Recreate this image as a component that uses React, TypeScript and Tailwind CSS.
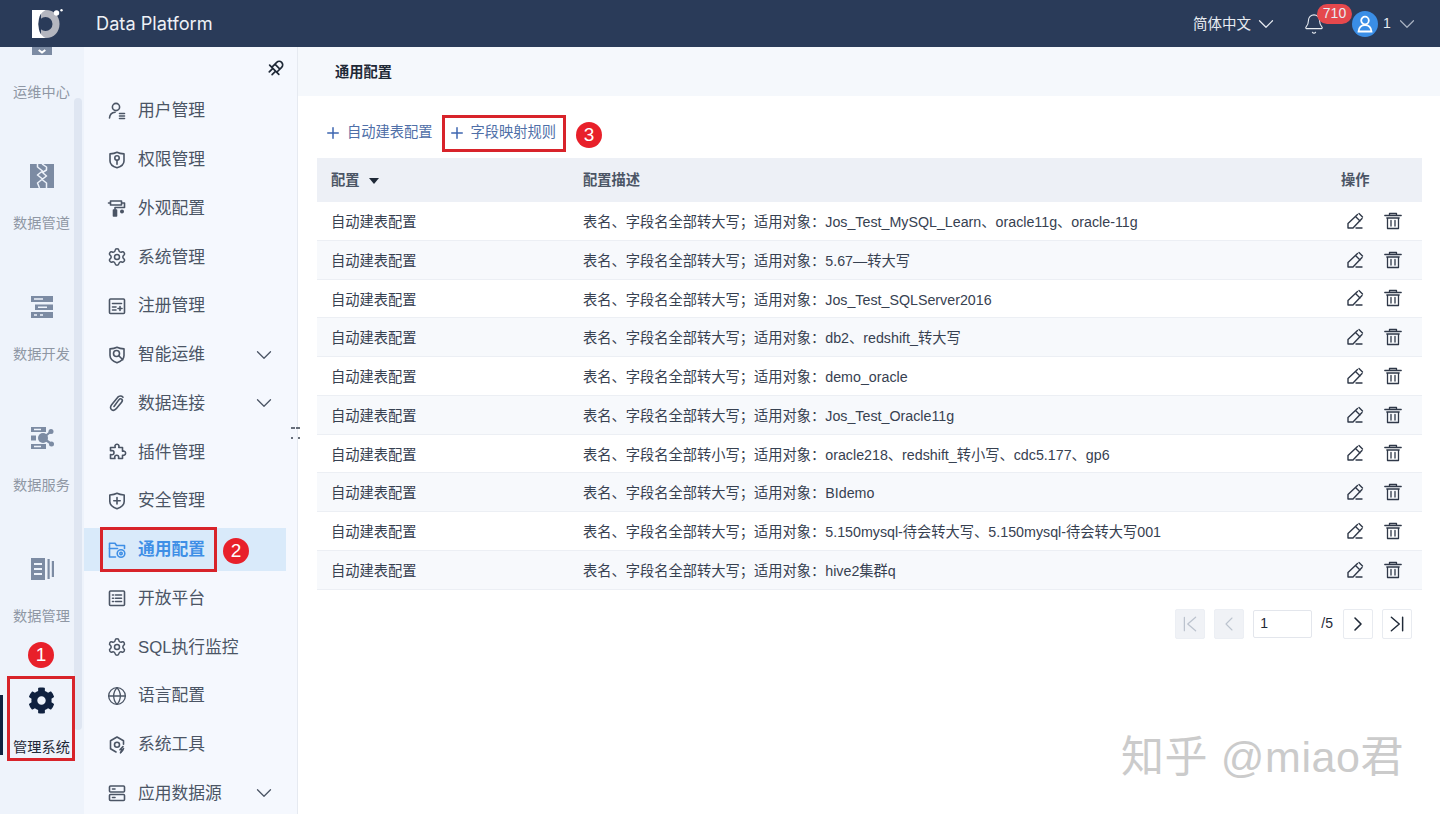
import { ChevronDown, ChevronLeft, ChevronRight, Globe, Settings, Plus, Bell } from "lucide-react";
import { FaCog } from "react-icons/fa";
import type { ReactNode } from "react";

const stroke = {
  fill: "none",
  stroke: "currentColor",
  strokeWidth: 1.6,
  strokeLinecap: "round" as const,
  strokeLinejoin: "round" as const,
};

function Ico({ children, className = "size-[20px]" }: { children: ReactNode; className?: string }) {
  return (
    <svg viewBox="0 0 20 20" className={className} {...stroke}>
      {children}
    </svg>
  );
}

/* ================= MENU ICONS ================= */

const UserIcon = () => (
  <Ico>
    <circle cx="9" cy="6" r="3.6" />
    <path d="M2.5 17c.3-3.6 2.6-5.6 5.6-5.8M12.5 12.5h5M12.5 15h5M12.5 17.5h5" />
  </Ico>
);
const ShieldKeyIcon = () => (
  <Ico>
    <path d="M10 2.200c2.400 1.300 4.600 1.600 7 1.700v7c0 3.300-3 5.600-7 6.900-4-1.300-7-3.600-7-6.900v-7c2.400-.1 4.600-.4 7-1.700z" />
    <circle cx="10" cy="8" r="2.200" />
    <path d="M10 10.200v4" />
  </Ico>
);
const RollerIcon = () => (
  <Ico>
    <path d="M3.500 3h11v4h-11zM3.500 5H1.500M14.500 5h3v4.500H8v2" />
    <rect x="6.500" y="12" width="3" height="6" fill="currentColor" />
    <circle cx="15" cy="13.500" r="1.200" fill="currentColor" />
  </Ico>
);
const RegisterIcon = () => (
  <Ico>
    <rect x="2.500" y="3" width="15" height="14.500" rx="1" />
    <path d="M5.500 7.500h9M5.500 11h3.500M5.500 14h3.500M11 12.500h4M13 10.500v4" />
  </Ico>
);
const OpsIcon = () => (
  <Ico>
    <path d="M10 2.200c2.600 1.200 4.800 1.500 7 1.700v6.500c0 3.300-3 5.800-7 7.400-4-1.600-7-4.100-7-7.400V3.900c2.200-.2 4.400-.5 7-1.700z" />
    <circle cx="9.500" cy="8.500" r="3" />
    <path d="M11.800 10.800l4 4" />
  </Ico>
);
const ClipIcon = () => (
  <Ico>
    <path d="M16 4.200c-1.500-1.700-3.900-1.500-5.400.2l-6 7.300c-1.500 1.900-1.400 3.900 0 5 1.500 1.200 3.400.6 4.800-1.100l5.200-6.400c.9-1.100.9-2.300.1-3-.9-.7-2-.4-2.900.7L7 13.500" />
  </Ico>
);
const PuzzleIcon = () => (
  <Ico>
    <path d="M8 3.500a2.100 2.100 0 0 1 4 .5l-.2 1.500h3.700v3.700l1.300-.2a2.200 2.200 0 0 1 .2 4.300l-1.500-.1v3.300h-4l.2-1.200a2 2 0 0 0-4-.1l.2 1.300H3.500v-4l1.300.2a2.100 2.100 0 0 0 .2-4.200l-1.500.1V5.500h4.700z" />
  </Ico>
);
const ShieldPlusIcon = () => (
  <Ico>
    <path d="M10 2.200c2.400 1.300 4.800 1.600 7.200 1.800v6.500c0 3.300-3 5.800-7.200 7.300-4.200-1.500-7.200-4-7.200-7.300V4c2.400-.2 4.800-.5 7.200-1.800z" />
    <path d="M6.800 9.800h6.400M10 6.600V13" />
  </Ico>
);
const FolderCogIcon = () => (
  <Ico>
    <path d="M8.500 17H2.500V3.200h5.500l1.500 2.300h8v3" />
    <path d="M2.500 8.500h8" />
    <circle cx="14" cy="13.500" r="3.800" />
    <circle cx="14" cy="13.500" r="1.200" />
  </Ico>
);
const ListIcon = () => (
  <Ico>
    <rect x="2.500" y="3" width="15" height="14.500" rx="1" />
    <path d="M5.500 7h1M8.500 7h6M5.500 10.200h1M8.500 10.200h6M5.500 13.500h1M8.500 13.500h6" />
  </Ico>
);
const GearLine = () => <Settings className="size-[20px]" strokeWidth={1.8} />;
const GlobeLine = () => <Globe className="size-[20px]" strokeWidth={1.6} />;
const ToolCogIcon = () => (
  <Ico>
    <path d="M10 2l6.500 3.800v3.500M3.500 5.800L10 2M3.500 5.800v7.900L9 17M16.500 13.500L14 17" />
    <circle cx="10" cy="9.800" r="2.500" />
    <path d="M16 11.500l-3 3.300h3l-2.500 3" />
  </Ico>
);
const ServerIcon = () => (
  <Ico>
    <rect x="2.500" y="3" width="15" height="6" rx="1" />
    <rect x="2.500" y="11.500" width="15" height="6" rx="1" />
    <path d="M5.500 6h2.500M5.500 14.500h2.500" />
  </Ico>
);

const menu = [
  { label: "用户管理", icon: <UserIcon /> },
  { label: "权限管理", icon: <ShieldKeyIcon /> },
  { label: "外观配置", icon: <RollerIcon /> },
  { label: "系统管理", icon: <GearLine /> },
  { label: "注册管理", icon: <RegisterIcon /> },
  { label: "智能运维", icon: <OpsIcon />, more: true },
  { label: "数据连接", icon: <ClipIcon />, more: true },
  { label: "插件管理", icon: <PuzzleIcon /> },
  { label: "安全管理", icon: <ShieldPlusIcon /> },
  { label: "通用配置", icon: <FolderCogIcon />, active: true },
  { label: "开放平台", icon: <ListIcon /> },
  { label: "SQL执行监控", icon: <GearLine /> },
  { label: "语言配置", icon: <GlobeLine /> },
  { label: "系统工具", icon: <ToolCogIcon /> },
  { label: "应用数据源", icon: <ServerIcon />, more: true },
];

/* ================= RAIL ICONS ================= */

const RailTop = () => (
  <svg viewBox="0 0 24 24" className="size-[20px] text-[#7c8ba3]">
    <rect x="0" y="0" width="24" height="24" fill="currentColor" />
    <path d="M8 18l4 3 4-3" fill="none" stroke="#fff" strokeWidth="2.400" />
  </svg>
);
const RailPipe = () => (
  <svg viewBox="0 0 24 24" className="size-[24px] text-[#7c8ba3]">
    <rect width="24" height="24" fill="currentColor" />
    <path
      fill="none"
      stroke="#eef3fb"
      strokeWidth="1.500"
      strokeLinejoin="round"
      d="M7.500 0v3l5 4-5 4 5 4-5 4 2 5M12 0l4.500 3v3l-4 2.500 4 3.500-4.500 3.500 4.500 3.500V24"
    />
  </svg>
);
const RailDev = () => (
  <svg viewBox="0 0 24 24" className="size-[24px] text-[#7c8ba3]">
    <path fill="currentColor" d="M1 1h22v6H1zM5 9.500h18v5.500H5zM1 17h22v6H1z" />
    <path stroke="#eef3fb" strokeWidth="1.500" d="M4 4h9M8 12.200h9M4 20h3M10 20h3" />
  </svg>
);
const RailService = () => (
  <svg viewBox="0 0 24 24" className="size-[24px] text-[#7c8ba3]">
    <path fill="currentColor" d="M1 1h15v5H1zM1 18h15v5H1zM1 9.500h5v5H1z" />
    <path stroke="#eef3fb" strokeWidth="1.300" d="M4 3.500h7M4 20.500h7" />
    <circle cx="13" cy="12" r="5" fill="currentColor" />
    <circle cx="21" cy="5.500" r="2.500" fill="currentColor" />
    <circle cx="21.500" cy="18" r="2.500" fill="currentColor" />
    <path stroke="currentColor" strokeWidth="2.200" d="M13 12l8-6.500M13 12l8.500 6" />
  </svg>
);
const RailManage = () => (
  <svg viewBox="0 0 24 24" className="size-[24px] text-[#7c8ba3]">
    <path fill="currentColor" d="M1 1h14v22H1zM17.500 2h2.200v20h-2.200zM21.800 4H24v16h-2.200z" />
    <path stroke="#eef3fb" strokeWidth="1.800" d="M4 7h8M4 12h8M4 17h8" />
  </svg>
);
const RailGear = () => <FaCog className="size-[27px] text-[#10213f]" />;

const rail = [
  { label: "运维中心", icon: <RailTop /> },
  { label: "数据管道", icon: <RailPipe /> },
  { label: "数据开发", icon: <RailDev /> },
  { label: "数据服务", icon: <RailService /> },
  { label: "数据管理", icon: <RailManage /> },
  { label: "管理系统", icon: <RailGear />, active: true },
];

const rows = [
  "表名、字段名全部转大写；适用对象：Jos_Test_MySQL_Learn、oracle11g、oracle-11g",
  "表名、字段名全部转大写；适用对象：5.67—转大写",
  "表名、字段名全部转大写；适用对象：Jos_Test_SQLServer2016",
  "表名、字段名全部转大写；适用对象：db2、redshift_转大写",
  "表名、字段名全部转大写；适用对象：demo_oracle",
  "表名、字段名全部转大写；适用对象：Jos_Test_Oracle11g",
  "表名、字段名全部转小写；适用对象：oracle218、redshift_转小写、cdc5.177、gp6",
  "表名、字段名全部转大写；适用对象：BIdemo",
  "表名、字段名全部转大写；适用对象：5.150mysql-待会转大写、5.150mysql-待会转大写001",
  "表名、字段名全部转大写；适用对象：hive2集群q",
];

/* ================= COMPONENTS ================= */

function NumberDot({ n, className }: { n: number; className: string }) {
  return (
    <div className={`absolute flex size-[26px] items-center justify-center rounded-full bg-[#e8202a] text-[19px] text-white ${className}`}>
      {n}
    </div>
  );
}

function PageButton({ disabled, children }: { disabled?: boolean; children: ReactNode }) {
  return (
    <div
      className={`flex size-[30px] items-center justify-center rounded-[2px] border ${
        disabled ? "border-[#eceff4] bg-[#f0f2f6] text-[#bcc3ce]" : "border-[#e8ebf0] bg-white text-[#1f2937]"
      }`}
    >
      {children}
    </div>
  );
}

function TrashIcon() {
  return (
    <svg viewBox="0 0 20 20" className="size-[20px]" {...stroke} strokeWidth={1.300}>
      <path d="M6.500 4V2.500h7V4M1.800 4.500h16.400M3.800 7h12.400M4.500 7v10.500h11V7M8 9.500v5.500M12 9.500v5.500" />
    </svg>
  );
}

function Logo() {
  return (
    <svg viewBox="0 0 32 30" className="h-[30px] w-[32px]">
      <path fill="#b4b6bf" d="M10 1h5c8 0 13.500 6 13.500 14S23 29 15 29h-5z" />
      <path fill="#fff" d="M1 1h13.500c-2.500 1.500-4 3-5 4.500-1.500 2.500-2 6-2 9.500s.5 7 2 9.500c1 1.500 2.500 3 5 4.500H1z" />
      <circle cx="14.500" cy="15" r="7" fill="#2a3b59" />
      <circle cx="25.500" cy="4" r="2.700" fill="#fff" />
      <circle cx="30.500" cy="1.200" r="1.200" fill="#fff" />
    </svg>
  );
}

export default function App() {
  return (
    <div className="relative flex h-[814px] w-[1440px] flex-col overflow-hidden bg-white font-['Liberation_Sans','Noto_Sans_CJK_SC',sans-serif]">
      {/* ===== HEADER ===== */}
      <header className="flex h-[47px] shrink-0 items-center bg-[#2a3b59] text-white">
        <div className="ml-[31px] w-[65px]">
          <Logo />
        </div>
        <div className="font-['Inter',sans-serif] text-[18.200px] text-[#eef1f6]">Data Platform</div>
        <div className="ml-auto flex items-center text-[14.500px] text-[#e8ecf2]">
          <span className="pt-[2px]">简体中文</span>
          <ChevronDown className="ml-[2px] size-[26px]" strokeWidth={1.100} />
          <div className="relative ml-[24px]">
            <Bell className="size-[22px]" strokeWidth={1.200} />
            <span className="absolute left-[14px] top-[-9px] flex h-[20px] w-[35px] items-center justify-center rounded-full bg-[#e5484d] text-[14px]">
              710
            </span>
          </div>
          <div className="ml-[27px] flex size-[26px] items-center justify-center rounded-full bg-[#3a8ee6]">
            <svg viewBox="0 0 20 20" className="size-[20px]" fill="none" stroke="#fff" strokeWidth="1.800">
              <circle cx="10" cy="6.500" r="3.800" />
              <path d="M3.500 17.500c.3-4 3-6.500 6.500-6.500s6.200 2.500 6.500 6.500z" />
            </svg>
          </div>
          <span className="ml-[5px] w-[8px] text-[14px]">1</span>
          <ChevronDown className="ml-[3px] mr-[20px] size-[26px] text-[#a9b3c2]" strokeWidth={1.100} />
        </div>
      </header>

      <div className="flex min-h-0 flex-1">
        {/* ===== RAIL ===== */}
        <aside className="relative w-[84px] shrink-0 overflow-hidden bg-[#eef3fb]">
          <div className="mt-[-68px]">
            {rail.map((r) => (
              <div key={r.label} className="flex h-[131px] flex-col items-center pr-[1px] pt-[50px]">
                <div className="flex h-[32px] items-center justify-center">{r.icon}</div>
                <div className={`mt-[21px] whitespace-nowrap text-[14.200px] leading-5 ${r.active ? "text-[#1f2937]" : "text-[#8f97a4]"}`}>
                  {r.label}
                </div>
              </div>
            ))}
          </div>
          <div className="absolute left-[74px] top-[51px] h-[632px] w-[8px] rounded-full bg-[#dfe6f2]" />
          <div className="absolute left-0 top-[648px] h-[60px] w-[3px] bg-[#10213f]" />
        </aside>

        {/* ===== MENU ===== */}
        <nav className="relative z-10 w-[214px] shrink-0 border-r border-[#e6eaf1] bg-[#f5f8fe]">
          <div className="flex h-[31px] items-end justify-end pr-[11px]">
            <svg viewBox="0 0 20 20" className="size-[20px] text-[#1f2937]" {...stroke} strokeWidth={1.700}>
              <g transform="rotate(45 10 10)">
                <path d="M6.500 12.500V5.500a3.500 3.500 0 0 1 7 0v7M3.500 12.500h13M6.500 8h7M8 12.500v5M12 12.500v5" />
              </g>
            </svg>
          </div>
          <ul className="mt-[8.500px]">
            {menu.map((m) => (
              <li key={m.label} className="mr-[11px] flex h-[48.750px] items-center">
                <div
                  className={`flex h-[43px] w-full items-center pl-[23px] pr-[9px] ${
                    m.active ? "bg-[#d9eafa] font-bold text-[#3f8fe6]" : "text-[#4b5565]"
                  }`}
                >
                  <div className="flex w-[31px] shrink-0 items-center">{m.icon}</div>
                  <span className="whitespace-nowrap text-[16.750px]">{m.label}</span>
                  {m.more && <ChevronDown className="ml-auto size-[26px] text-[#4b5565]" strokeWidth={1.200} />}
                </div>
              </li>
            ))}
          </ul>
          <div className="absolute right-[-3px] top-[380px] flex h-[16px] w-[9px] flex-wrap justify-between gap-y-[4px]">
            {[0, 1, 2, 3, 4, 5].map((i) => (
              <span key={i} className="size-[2px] rounded-full bg-[#39424f]" />
            ))}
          </div>
        </nav>

        {/* ===== CONTENT ===== */}
        <main className="min-w-0 flex-1">
          <div className="flex h-[49px] items-center bg-[#f5f8fc] pl-[37px] pt-[2px] text-[14.250px] font-bold text-[#1f2937]">通用配置</div>
          <div className="pl-[19px] pr-[18px]">
            <div className="flex h-[62px] items-center pt-[11px] text-[14.250px] text-[#4f6fa8]">
              <Plus className="ml-[7px] size-[18px] text-[#3e66b0]" strokeWidth={2} />
              <span className="ml-[5px] whitespace-nowrap">自动建表配置</span>
              <Plus className="ml-[15px] size-[18px] text-[#3e66b0]" strokeWidth={2} />
              <span className="ml-[5px] whitespace-nowrap">字段映射规则</span>
            </div>

            <div className="flex h-[44px] items-center bg-[#edf0f6] pt-[2px] text-[14.250px] font-bold text-[#4b5565]">
              <div className="flex w-[266px] shrink-0 items-center pl-[14px]">
                配置
                <span className="ml-[9px] h-0 w-0 border-x-[5px] border-t-[6px] border-x-transparent border-t-[#1f2937]" />
              </div>
              <div className="flex-1">配置描述</div>
              <div className="w-[81px] shrink-0">操作</div>
            </div>
            {rows.map((text, i) => (
              <div
                key={i}
                className={`flex h-[38.750px] items-center border-b border-[#eceff4] text-[14.250px] text-[#374151] ${
                  i % 2 === 1 ? "bg-[#f7f9fc]" : "bg-white"
                }`}
              >
                <div className="w-[266px] shrink-0 pl-[14px] pt-[4px]">自动建表配置</div>
                <div className="flex-1 whitespace-nowrap pt-[4px]">{text}</div>
                <div className="flex w-[81px] shrink-0 items-center text-[#2f3848]">
                  <svg viewBox="0 0 20 20" className="ml-[4px] size-[20px]" {...stroke} strokeWidth={1.400}>
                    <path d="M12.500 3.500L3 12.500v4.500h5l9-9.500M10.500 5.500l4.500 4.500M14 2.500l3.500 3.500M11 17h6" />
                  </svg>
                  <div className="ml-[18px]">
                    <TrashIcon />
                  </div>
                </div>
              </div>
            ))}

            <div className="mt-[19px] flex items-center justify-end pr-[10px] text-[14px] text-[#1f2937]">
              <PageButton disabled>
                <svg viewBox="0 0 16 16" className="size-[18px]" {...stroke} strokeWidth={1.100}>
                  <path d="M3 2v12M13 2L6 8l7 6" />
                </svg>
              </PageButton>
              <div className="ml-[9px]">
                <PageButton disabled>
                  <ChevronLeft className="size-[24px]" strokeWidth={1.100} />
                </PageButton>
              </div>
              <div className="ml-[9px] flex h-[28px] w-[59px] items-center rounded-[2px] border border-[#e3e6ec] pl-[6px]">1</div>
              <span className="ml-[9px] mr-[10px]">/5</span>
              <PageButton>
                <ChevronRight className="size-[24px]" strokeWidth={1.600} />
              </PageButton>
              <div className="ml-[9px]">
                <PageButton>
                  <svg viewBox="0 0 16 16" className="size-[18px]" {...stroke} strokeWidth={1.300}>
                    <path d="M3 2l7 6-7 6M13 2v12" />
                  </svg>
                </PageButton>
              </div>
            </div>
          </div>
        </main>
      </div>

      {/* ===== ANNOTATIONS ===== */}
      <div className="absolute left-[7px] top-[676px] z-20 h-[85px] w-[68px] border-[3px] border-[#d8232a]" />
      <div className="absolute left-[100px] top-[527px] z-20 h-[45px] w-[117px] border-[3px] border-[#d8232a]" />
      <div className="absolute left-[442px] top-[115px] z-20 h-[37px] w-[124px] border-[3px] border-[#d8232a]" />
      <NumberDot n={1} className="left-[28px] top-[642px] z-20" />
      <NumberDot n={2} className="left-[223px] top-[538px] z-20" />
      <NumberDot n={3} className="left-[576px] top-[122px] z-20" />

      {/* watermark */}
      <div className="absolute left-[1121px] top-[731px] whitespace-nowrap text-[43px] leading-[52px] tracking-[0.6px] text-[#cbcbcb]">知乎 @miao君</div>
    </div>
  );
}
